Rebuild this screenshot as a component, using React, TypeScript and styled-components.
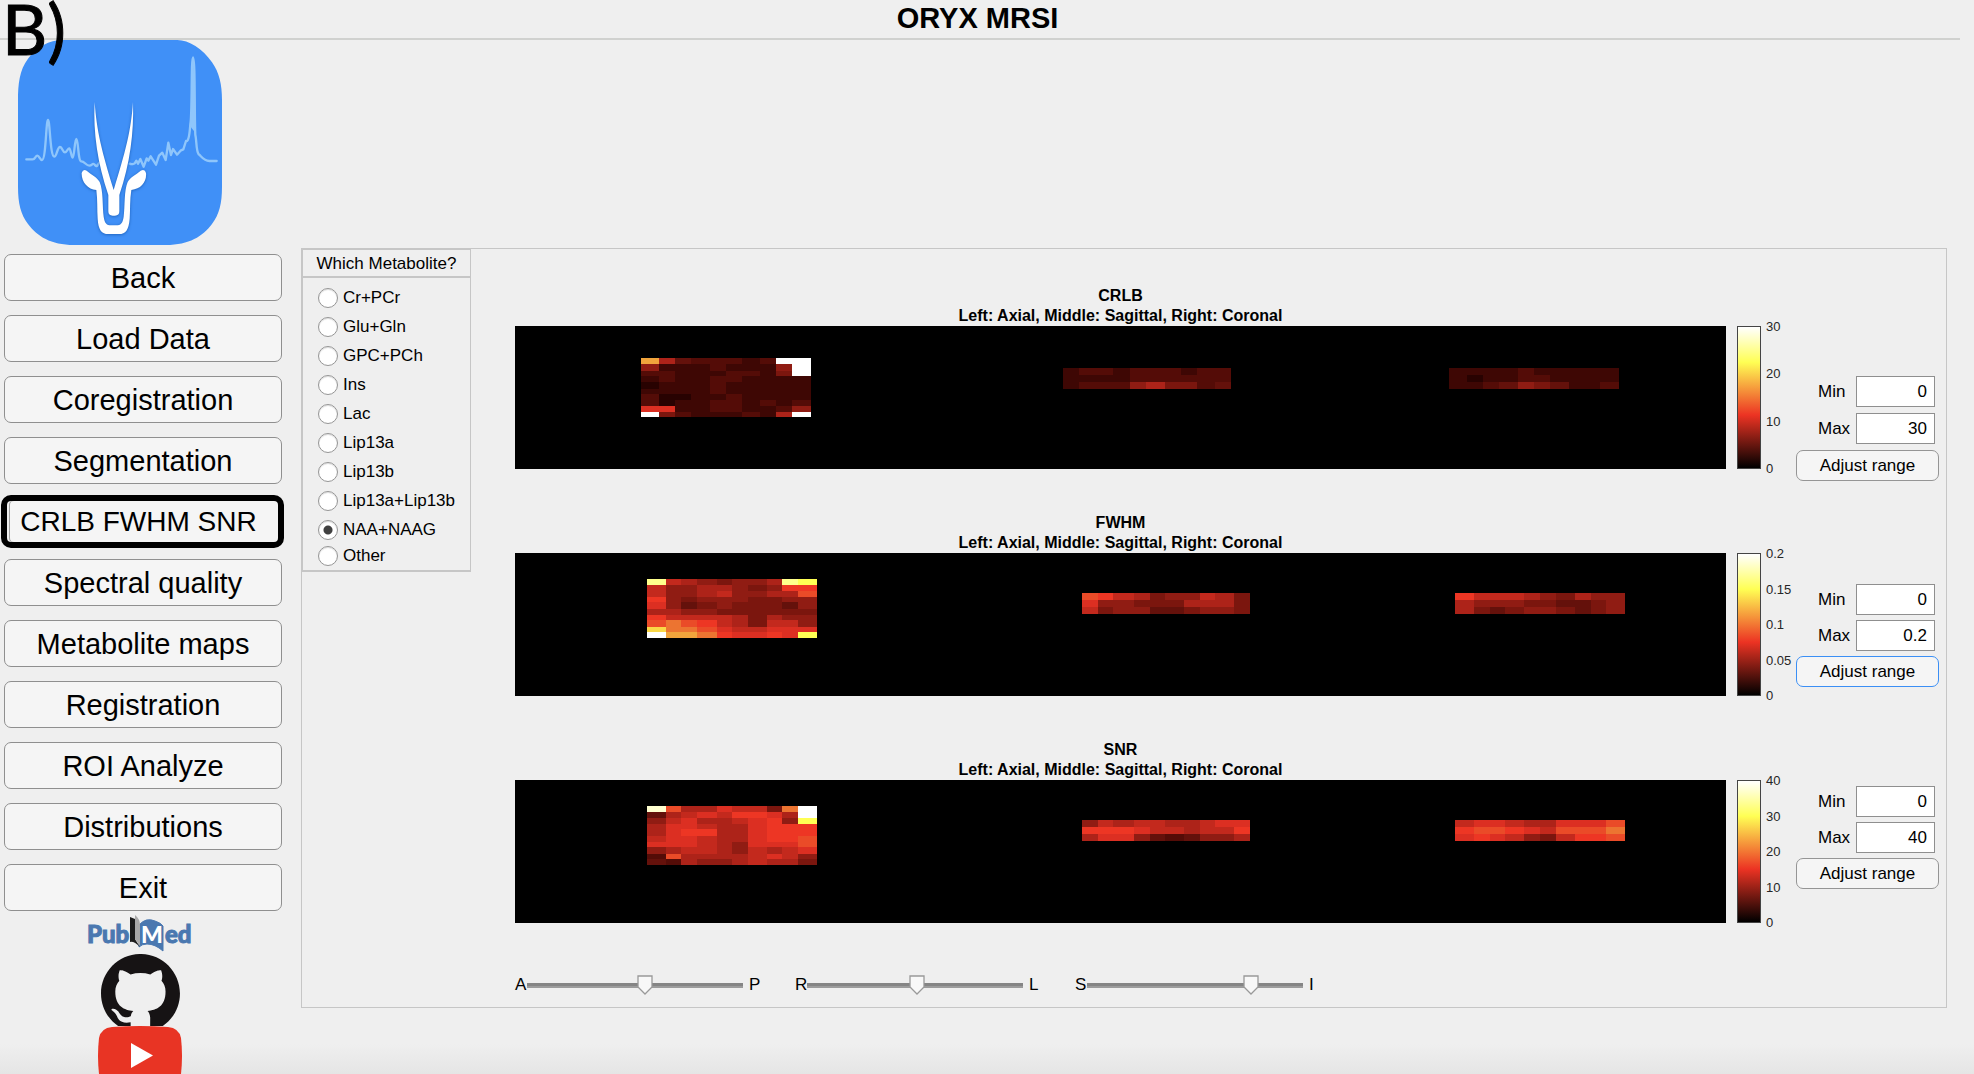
import React, { useState } from "react";
import styled, { createGlobalStyle } from "styled-components";

const Global = createGlobalStyle`
  *, *::before, *::after { box-sizing: border-box; }
  body {
    margin: 0;
    background: #efefef;
    color: #000;
    font-family: "Liberation Sans", Arial, Helvetica, sans-serif;
    font-size: 17px;
  }
  button, input { font: inherit; color: inherit; }
`;

const line = "#c6c6c6";

/* ---------- shell ---------- */

const Page = styled.div`
  position: relative;
  min-height: 100vh;
  background: linear-gradient(to top, #e5e5e5, #efefef 30px);
`;

const Header = styled.header`
  display: flex;
  justify-content: center;
  margin-right: 14px;
  padding: 1px 5px 0 0;
  height: 40px;
  border-bottom: 2px solid #d0d1cf;
`;

const Title = styled.h1`
  margin: 0;
  font-size: 29px;
  line-height: 34px;
`;

const FigureTag = styled.span`
  position: absolute;
  top: 0;
  left: 2px;
  font-family: Lato, "Open Sans", sans-serif;
  font-size: 70px;
  line-height: 56px;
  -webkit-text-stroke: 1px #000;
`;

const Body = styled.div`
  display: flex;
  align-items: flex-start;
  padding-right: 27px;
`;

/* ---------- sidebar ---------- */

const Sidebar = styled.nav`
  display: flex;
  flex-direction: column;
  flex: 0 0 301px;
  padding-left: 4px;
`;

const AppIcon = styled.svg`
  width: 204px;
  height: 205px;
  margin: 0 0 9px 14px;
`;

const NavList = styled.div`
  display: flex;
  flex-direction: column;
  gap: 14px;
  width: 278px;
`;

const NavButton = styled.button<{ $active?: boolean }>`
  height: 47px;
  padding: 0;
  font-size: 29px;
  line-height: 34px;
  white-space: nowrap;
  background: #f5f5f5;
  border: 1px solid #8f8f8f;
  border-radius: 7px;
  ${(p) =>
    p.$active &&
    `
    height: 53px;
    margin: -3px -2px -3px -3px;
    padding-right: 8px;
    font-size: 28px;
    border: 6px solid #000;
    border-radius: 10px;
    box-shadow: inset 2px 0 0 #efefef, inset 3px 0 0 #a0a0a0;
  `}
`;

const Links = styled.div`
  display: flex;
  flex-direction: column;
  align-items: center;
  width: 272px;
  padding-top: 4px;
`;

const LogoLink = styled.a`
  display: block;
  svg { display: block; }
`;

/* ---------- main panel ---------- */

const Panel = styled.main`
  display: flex;
  align-items: flex-start;
  flex: 1;
  margin-top: 208px;
  padding-right: 7px;
  border: 1px solid ${line};
`;

const RadioPanel = styled.div`
  flex: 0 0 169px;
  border: solid ${line};
  border-width: 1px 1px 2px 1px;
`;

const RadioTitle = styled.div`
  height: 28px;
  line-height: 27px;
  text-align: center;
  border-bottom: 2px solid ${line};
`;

const RadioList = styled.div`
  display: flex;
  flex-direction: column;
  padding: 5px 0 0 15px;
`;

const RadioRow = styled.label`
  display: flex;
  align-items: center;
  gap: 5px;
  height: 29px;
  white-space: nowrap;
  &:last-child { margin-top: -3px; }
`;

const Radio = styled.input`
  appearance: none;
  flex: none;
  width: 20px;
  height: 20px;
  margin: 0;
  border: 1px solid #959595;
  border-radius: 50%;
  background: #fff;
  box-shadow: inset 0 1px 1px #ddd;
  &:checked {
    background: radial-gradient(circle, #404040 4px, #fff 5px);
  }
`;

const Plots = styled.div`
  flex: 1;
  min-width: 0;
  padding: 37px 0 12px 44px;
`;

const PlotRow = styled.section`
  display: grid;
  grid-template-columns: minmax(0, 1fr) 24px 35px 143px;
  grid-template-rows: 40px 143px;
  min-height: 227px;
`;

const PlotTitle = styled.h2`
  grid-column: 1;
  margin: 0;
  font-size: 16px;
  line-height: 20px;
  text-align: center;
`;

const PlotMap = styled.svg`
  grid-column: 1;
  grid-row: 2;
  display: block;
  width: calc(100% - 11px);
  height: 143px;
  background: #000;
`;

const TitleText = styled.span`
  display: block;
  padding-right: 11px;
`;

const ColorBar = styled.div`
  grid-column: 2;
  grid-row: 2;
  border: 1px solid #444;
  background: linear-gradient(to top, #000, #ec3323 37.5%, #ffff54 75%, #fff);
`;

const Ticks = styled.div`
  grid-column: 3;
  grid-row: 2;
  display: flex;
  flex-direction: column;
  justify-content: space-between;
  margin: -7px 0;
  padding-left: 5px;
  font-size: 13px;
  line-height: 15px;
  color: #262626;
`;

const Controls = styled.form<{ $top: number; $gap: number }>`
  grid-column: 4;
  grid-row: 1 / span 2;
  display: flex;
  flex-direction: column;
  gap: ${(p) => p.$gap}px;
  padding-top: ${(p) => p.$top}px;
`;

const Field = styled.label`
  display: grid;
  grid-template-columns: 38px 79px;
  align-items: center;
  justify-content: end;
  padding-right: 4px;
`;

const NumberBox = styled.input`
  width: 79px;
  height: 31px;
  padding: 0 7px;
  text-align: right;
  border: 1px solid #8f8f8f;
  border-radius: 0;
  background: #fff;
`;

const AdjustButton = styled.button<{ $focus?: boolean }>`
  flex: none;
  height: 31px;
  padding: 0;
  border: 1px solid ${(p) => (p.$focus ? "#3b8ff5" : "#959595")};
  border-radius: 7px;
  background: #f5f5f5;
`;

const Sliders = styled.div`
  display: flex;
  gap: 34px;
  padding-top: 8px;
`;

const SliderGroup = styled.label`
  display: grid;
  grid-template-columns: 12px 216px 18px;
  align-items: center;
  height: 20px;
`;

const SliderEnd = styled.span`
  padding-left: 6px;
`;

const thumb = encodeURIComponent(
  '<svg xmlns="http://www.w3.org/2000/svg" width="16" height="20"><path d="M1 1H15V12L8 19L1 12Z" fill="#f8f8f8" stroke="#999" stroke-width="1.3"/></svg>'
);

const Range = styled.input`
  appearance: none;
  width: 216px;
  height: 20px;
  margin: 0;
  background: linear-gradient(#858585 50%, #9c9c9c 50%) center / 100% 5px no-repeat;
  &::-webkit-slider-thumb {
    appearance: none;
    width: 16px;
    height: 20px;
    border: 0;
    background: url("data:image/svg+xml,${thumb}") no-repeat;
  }
`;

/* ---------- data ---------- */

const palette: Record<string, string> = {
  a: "#280201", b: "#3e0704", c: "#540c07", d: "#64110b", e: "#7b160e",
  f: "#901c13", g: "#ad2319", h: "#c3291d", i: "#dc2f22", j: "#ed3624",
  k: "#ea4b28", l: "#ec7431", m: "#f1a43c", n: "#fad847", o: "#ffff54",
  p: "#ffff8c", q: "#ffffd0", w: "#ffffff",
};

type Grid = { xs: number[]; ys: number[]; rows: string[] };

const axialX = [132, 151, 166, 182, 202, 217, 233, 252, 267, 283, 302];
const axialY = [26, 32, 38, 44, 49, 56, 62, 67, 74, 79, 85];
const sagittalX = [567, 583, 598, 618, 634, 649, 668, 684, 699, 718, 734];
const coronalX = [939, 958, 974, 989, 1008, 1024, 1040, 1059, 1075, 1090, 1109];
const sliceY = [40, 47, 54, 61];

const crlb: Grid[] = [
  {
    xs: [126, 144, 160, 176, 195, 211, 227, 245, 261, 277, 296],
    ys: [32, 38, 45, 50, 56, 63, 68, 74, 80, 86, 91],
    rows: ["mgdcccbcww", "fbbbcbbbfw", "ccbbbccbew", "bcbbccbbbb", "abbbcbbbbb",
      "bbbbcbbbbb", "caabbcbbbb", "cabbccbcbc", "iibbccbbcf", "wecbbbcbgw"],
  },
  {
    xs: [548, 564, 582, 598, 614, 630, 649, 665, 681, 699, 715],
    ys: [42, 49, 56, 63],
    rows: ["bccbcccbcc", "bbbbcccccc", "bcccfgeecd"],
  },
  {
    xs: [933, 951, 967, 983, 1002, 1018, 1034, 1053, 1068, 1084, 1103],
    ys: [42, 49, 56, 63],
    rows: ["bbbbcbbbbb", "babbccbbbb", "bbcdfedbbc"],
  },
];

const fwhm: Grid[] = [
  {
    xs: axialX, ys: axialY,
    rows: ["phgfeffgpo", "hffggfefjj", "hffghffggk", "jfefffeeff", "ifdefeeedf",
      "ggffeeeeee", "jhhhhgegff", "klkjhgehhf", "nllkihhiii", "wmmljiijio"],
  },
  { xs: sagittalX, ys: sliceY, rows: ["kjhgeffhge", "iffeeeggge", "heffddeffe"] },
  { xs: coronalX, ys: sliceY, rows: ["jhhhgfegff", "gfffeeddef", "gedeffedef"] },
];

const snr: Grid[] = [
  {
    xs: axialX, ys: axialY,
    rows: ["qkggihhelw", "dghihjjigw", "fhigghijfo", "giihggijjj", "gijjggijjj",
      "hiihggijjk", "iiihgfiiik", "fghhgfhghi", "ckgggghihf", "dcgffghgge"],
  },
  { xs: sagittalX, ys: sliceY, rows: ["fhghhgghii", "jjjihhghhj", "giifdcdffg"] },
  { xs: coronalX, ys: sliceY, rows: ["hiihggiiik", "jkkjihkkkl", "ijihfehjjk"] },
];

const plots = [
  { name: "CRLB", grids: crlb, ticks: ["30", "20", "10", "0"], max: "30", top: 90, gap: 6 },
  { name: "FWHM", grids: fwhm, ticks: ["0.2", "0.15", "0.1", "0.05", "0"], max: "0.2", top: 71, gap: 5, focus: true },
  { name: "SNR", grids: snr, ticks: ["40", "30", "20", "10", "0"], max: "40", top: 46, gap: 5 },
];

const metabolites = ["Cr+PCr", "Glu+Gln", "GPC+PCh", "Ins", "Lac", "Lip13a", "Lip13b",
  "Lip13a+Lip13b", "NAA+NAAG", "Other"];

const pages = ["Back", "Load Data", "Coregistration", "Segmentation", "CRLB FWHM SNR",
  "Spectral quality", "Metabolite maps", "Registration", "ROI Analyze", "Distributions", "Exit"];

const axes = [
  { from: "A", to: "P", value: 55 },
  { from: "R", to: "L", value: 51 },
  { from: "S", to: "I", value: 78 },
];

/* ---------- drawings ---------- */

const OryxIcon = () => (
  <AppIcon viewBox="56 120 612 615" role="img" aria-label="Oryx">
    <path
      fill="#4090f7"
      d="M190 120H534C568 120 610 146 638 187C660 218 668 254 668 300V560C668 610 660 642 638 672C610 709 570 735 500 735H224C154 735 114 709 86 672C64 642 56 610 56 560V300C56 254 60 210 86 176C112 141 150 120 190 120Z"
    />
    <path
      fill="none"
      stroke="#8fc6fb"
      strokeWidth="7"
      strokeLinecap="round"
      strokeLinejoin="round"
      d="M81 478H100C108 478 108 467 114 467C120 467 122 480 128 480C140 480 140 360 146 360C152 360 152 470 165 470C172 470 174 441 182 441C189 441 190 457 197 457C203 457 205 445 210 445C214 445 216 473 220 473C225 473 226 417 231 417C237 417 236 484 246 484C256 484 260 497 270 497C278 497 278 490 283 492C288 494 288 500 293 498L300 488M391 491C399 495 402 491 406 490L411 482L416 491L423 477L433 500L442 475L447 482L454 469L470 494L479 467L489 458L499 480L507 428L515 465L521 447L533 464L545 451L552 448L560 423C568 426 571 400 573 372C579 350 575 172 581 172C588 172 585 350 588 405C592 420 590 452 598 463C606 468 612 482 630 483H652"
    />
    <path d="M574 380L579 190H583L589 400Z" fill="#8fc6fb" />
    <g fill="#fff" style={{ filter: "drop-shadow(0 2px 4px #1c5fb8)" }}>
      <path d="M286 306C292 395 308 455 343 570C378 455 395 395 401 306C404 400 392 490 360 585V634Q360 647 347 647H340Q327 647 327 634V585C295 490 281 400 286 306Z" />
      <path d="M247 519Q251 506 262 512C277 525 294 532 301 546C312 570 309 620 313 650C316 670 322 676 335 676H351C364 676 370 670 373 650C377 620 374 570 385 546C392 532 409 525 424 512Q437 506 440 519C443 545 425 568 396 570C391 600 393 630 391 656C388 690 379 702 359 702H327C307 702 297 690 295 656C293 630 295 600 291 570C265 568 246 545 247 519Z" />
    </g>
  </AppIcon>
);

const PubMedLogo = () => (
  <svg width="106" height="39" viewBox="0 0 106 39" role="img" aria-label="PubMed">
    <g fontFamily="Lato, sans-serif" fontWeight="900" fontSize="24" fill="#4a78b0" stroke="#4a78b0" strokeWidth="1">
      <text x="0" y="28">Pub</text>
      <path d="M52 10Q59 2 68 6Q74 8 76 11V36Q68 29 60 29Q55 29 52 32Z" />
      <text x="54" y="28" fill="#fff" stroke="none" fontSize="23">M</text>
      <text x="78" y="28">ed</text>
    </g>
    <path d="M43 2L48 4V24L53 32Q47 26 43 27Z" fill="#1d1d1d" />
    <path d="M48 0Q53 4 53 10V31L48 24Z" fill="#a9a9a9" />
  </svg>
);

const GitHubLogo = () => (
  <svg width="79" height="72" viewBox="0 0 79 72" role="img" aria-label="GitHub">
    <path
      transform="scale(3.29) translate(0 -0.3)"
      fill="#161314"
      d="M12 .297c-6.63 0-12 5.373-12 12 0 5.303 3.438 9.8 8.205 11.385.6.113.82-.258.82-.577 0-.285-.01-1.04-.015-2.04-3.338.724-4.042-1.61-4.042-1.61C4.422 18.07 3.633 17.7 3.633 17.7c-1.087-.744.084-.729.084-.729 1.205.084 1.838 1.236 1.838 1.236 1.07 1.835 2.809 1.305 3.495.998.108-.776.417-1.305.76-1.605-2.665-.3-5.466-1.332-5.466-5.93 0-1.31.465-2.38 1.235-3.22-.135-.303-.54-1.523.105-3.176 0 0 1.005-.322 3.3 1.23.96-.267 1.98-.399 3-.405 1.02.006 2.04.138 3 .405 2.28-1.552 3.285-1.23 3.285-1.23.645 1.653.24 2.873.12 3.176.765.84 1.23 1.91 1.23 3.22 0 4.61-2.805 5.625-5.475 5.92.42.36.81 1.096.81 2.22 0 1.606-.015 2.896-.015 3.286 0 .315.21.69.825.57C20.565 22.092 24 17.592 24 12.297c0-6.627-5.373-12-12-12"
    />
  </svg>
);

const YouTubeLogo = () => (
  <svg width="84" height="48" viewBox="0 0 84 48" role="img" aria-label="YouTube">
    <path d="M14 1Q42 -1 70 1Q81 2 83 12Q85 30 83 48H1Q-1 30 1 12Q3 2 14 1Z" fill="#e83424" />
    <path d="M33 17L55 29.500L33 42Z" fill="#fff" />
  </svg>
);

const HeatMap = ({ name, grids }: { name: string; grids: Grid[] }) => (
  <PlotMap viewBox="0 0 1210 143" preserveAspectRatio="none" shapeRendering="crispEdges" role="img" aria-label={name}>
    {grids.map((g, k) =>
      g.rows.map((row, r) =>
        [...row].map((c, i) => (
          <rect
            key={`${k}-${r}-${i}`}
            x={g.xs[i]}
            y={g.ys[r]}
            width={g.xs[i + 1] - g.xs[i]}
            height={g.ys[r + 1] - g.ys[r]}
            fill={palette[c]}
          />
        ))
      )
    )}
  </PlotMap>
);

export default function App() {
  const [metabolite, setMetabolite] = useState("NAA+NAAG");
  return (
    <Page>
      <Global />
      <Header>
        <Title>ORYX MRSI</Title>
      </Header>
      <Body>
        <Sidebar>
          <OryxIcon />
          <NavList>
            {pages.map((p) => (
              <NavButton key={p} type="button" $active={p === "CRLB FWHM SNR"}>
                {p}
              </NavButton>
            ))}
          </NavList>
          <Links>
            <LogoLink href="#pubmed"><PubMedLogo /></LogoLink>
            <LogoLink href="#github"><GitHubLogo /></LogoLink>
            <LogoLink href="#youtube"><YouTubeLogo /></LogoLink>
          </Links>
        </Sidebar>
        <Panel>
          <RadioPanel role="radiogroup" aria-labelledby="metabolite-title">
            <RadioTitle id="metabolite-title">Which Metabolite?</RadioTitle>
            <RadioList>
              {metabolites.map((m) => (
                <RadioRow key={m}>
                  <Radio type="radio" name="metabolite" checked={m === metabolite} onChange={() => setMetabolite(m)} />
                  {m}
                </RadioRow>
              ))}
            </RadioList>
          </RadioPanel>
          <Plots>
            {plots.map((p) => (
              <PlotRow key={p.name}>
                <PlotTitle>
                  <TitleText>{p.name}</TitleText>
                  <TitleText>Left: Axial, Middle: Sagittal, Right: Coronal</TitleText>
                </PlotTitle>
                <HeatMap name={p.name} grids={p.grids} />
                <ColorBar />
                <Ticks>
                  {p.ticks.map((t) => (
                    <span key={t}>{t}</span>
                  ))}
                </Ticks>
                <Controls $top={p.top} $gap={p.gap}>
                  <Field>
                    Min
                    <NumberBox type="text" defaultValue="0" />
                  </Field>
                  <Field>
                    Max
                    <NumberBox type="text" defaultValue={p.max} />
                  </Field>
                  <AdjustButton type="button" $focus={p.focus}>Adjust range</AdjustButton>
                </Controls>
              </PlotRow>
            ))}
            <Sliders>
              {axes.map((a) => (
                <SliderGroup key={a.from}>
                  <span>{a.from}</span>
                  <Range type="range" min={0} max={100} defaultValue={a.value} />
                  <SliderEnd>{a.to}</SliderEnd>
                </SliderGroup>
              ))}
            </Sliders>
          </Plots>
        </Panel>
      </Body>
      <FigureTag>B)</FigureTag>
    </Page>
  );
}
